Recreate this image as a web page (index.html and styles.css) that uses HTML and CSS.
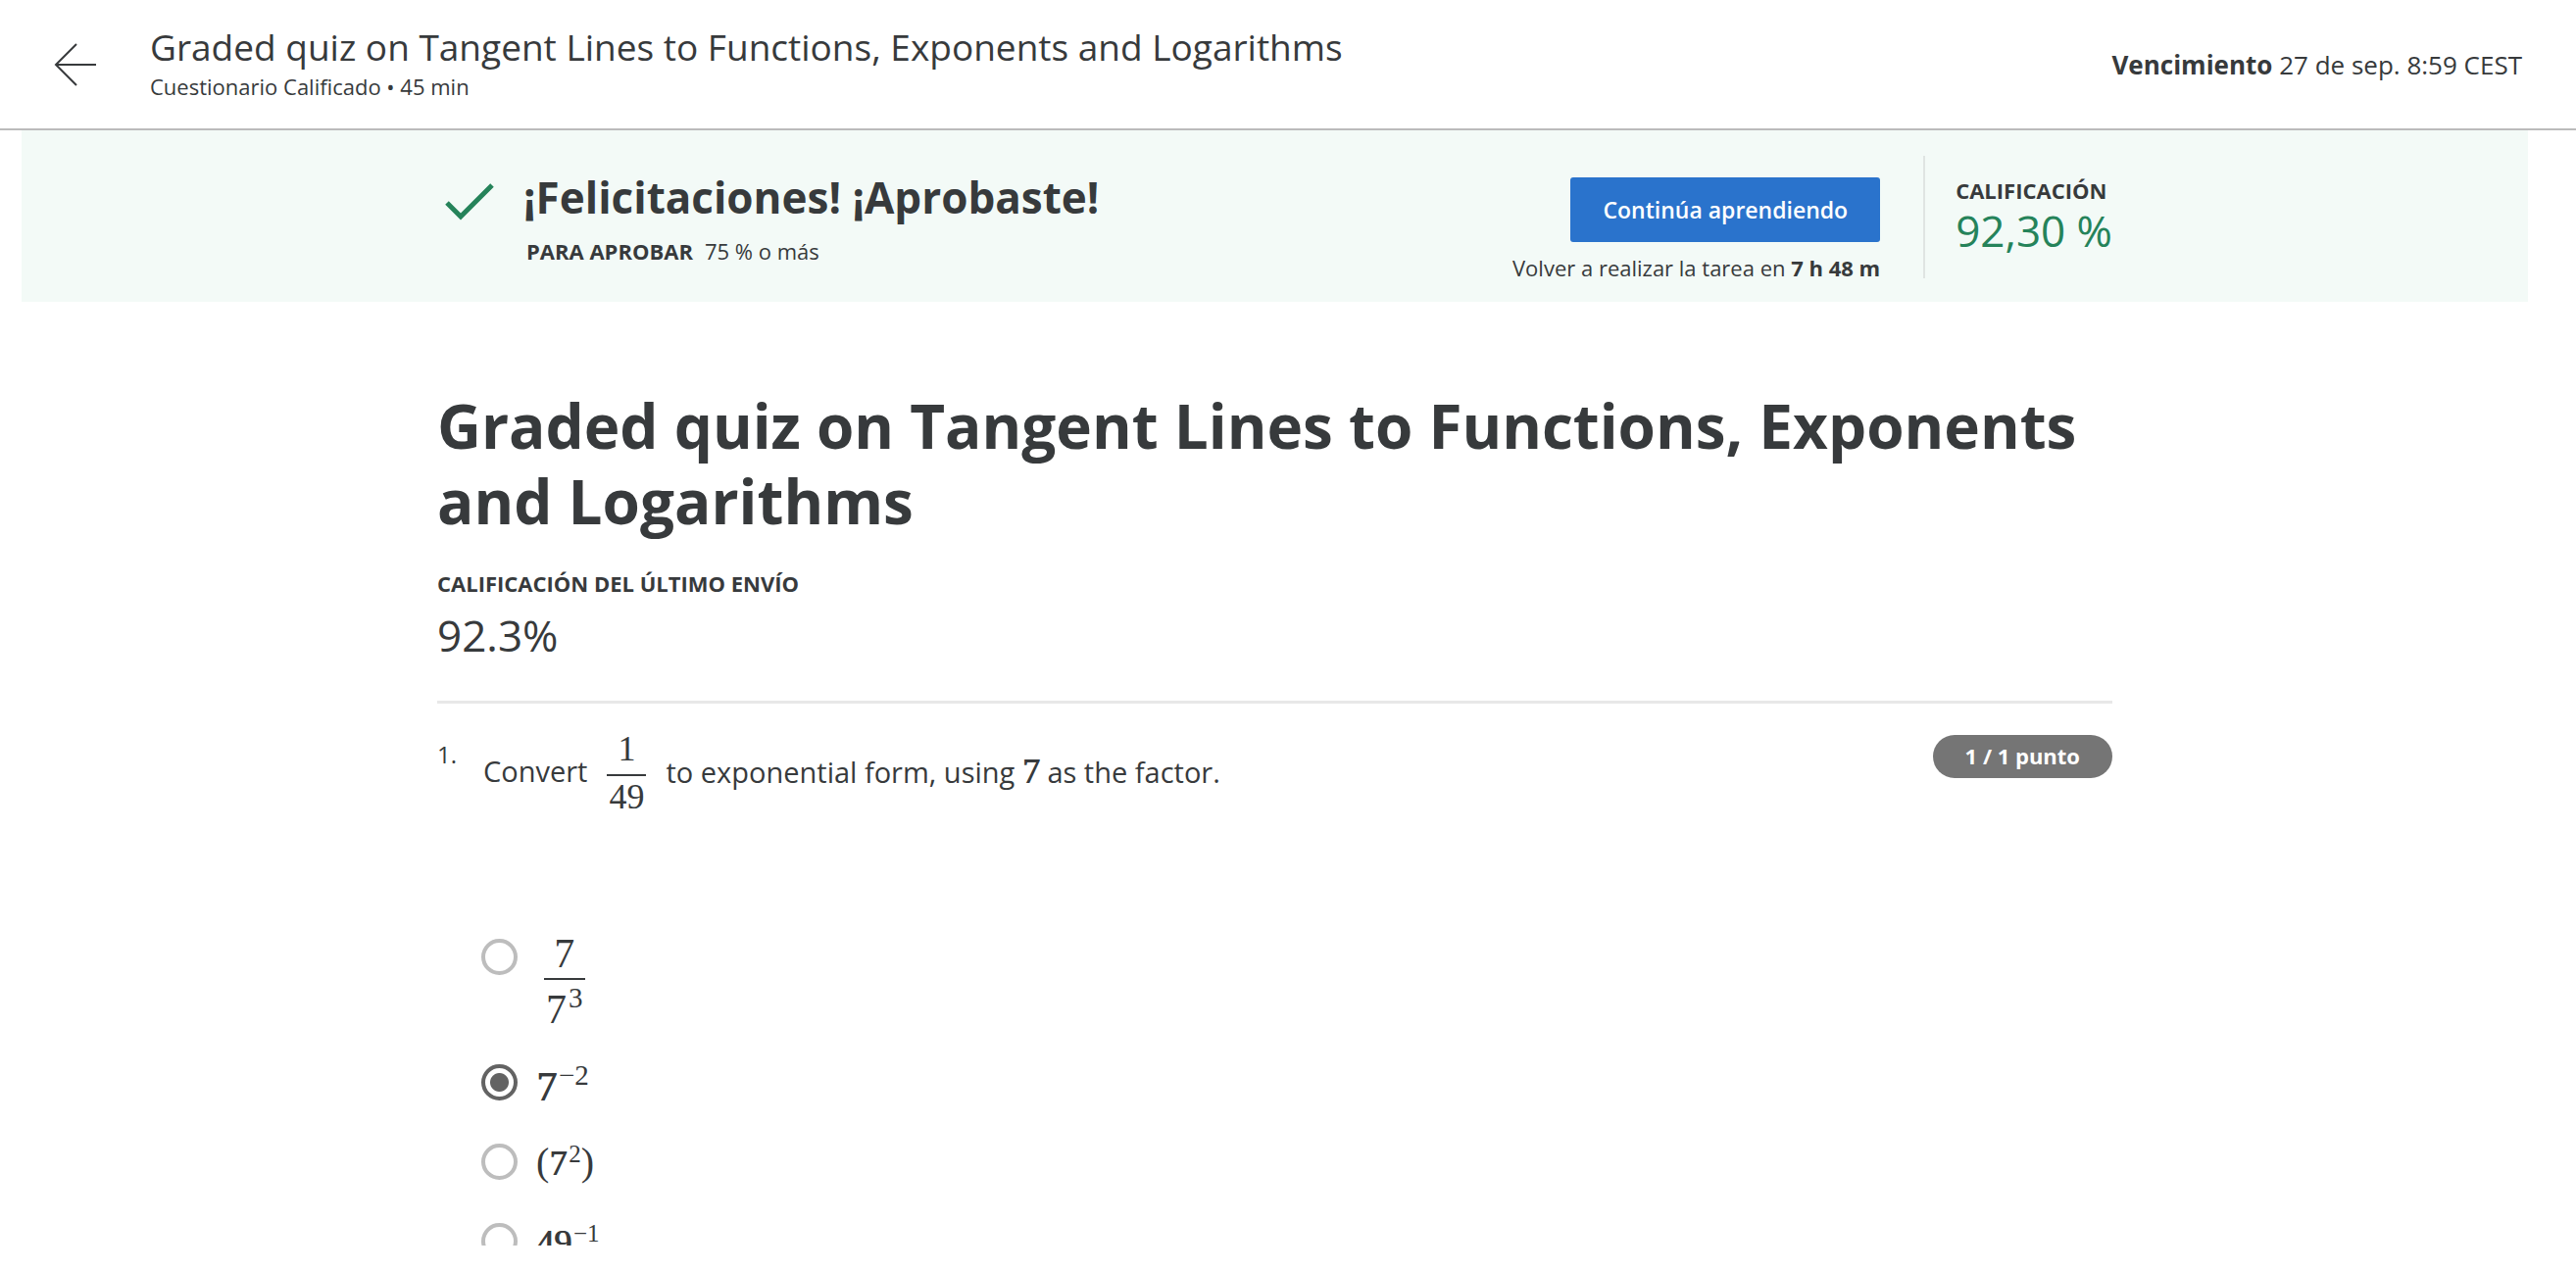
FILE: index.html
```html
<!DOCTYPE html>
<html lang="es">
<head>
  <meta charset="utf-8">
  <meta name="viewport" content="width=device-width, initial-scale=1">
  <title>Graded quiz on Tangent Lines to Functions, Exponents and Logarithms</title>
  <link rel="stylesheet" href="styles.css">
</head>
<body>
  <header class="topbar">
    <a class="back" href="#" aria-label="Volver">
      <svg class="back-icon" viewBox="0 0 44 44" aria-hidden="true">
        <path d="M43 22H2M23 1L2 22l21 21" fill="none" stroke="currentColor" stroke-width="2"/>
      </svg>
    </a>
    <div class="topbar-text">
      <p class="topbar-title">Graded quiz on Tangent Lines to Functions, Exponents and Logarithms</p>
      <p class="topbar-meta">Cuestionario Calificado • 45 min</p>
    </div>
    <p class="due"><strong>Vencimiento</strong> 27 de sep. 8:59 CEST</p>
  </header>

  <main class="page">
    <section class="banner">
      <div class="column banner-row">
        <svg class="check" viewBox="0 0 50 38" aria-hidden="true">
          <path d="M2 20L16 34L48 2" fill="none" stroke="currentColor" stroke-width="5"/>
        </svg>
        <div class="result">
          <h2 class="result-title">¡Felicitaciones! ¡Aprobaste!</h2>
          <p class="result-rule"><strong>PARA APROBAR</strong><span>75 % o más</span></p>
        </div>
        <div class="actions">
          <button class="primary" type="button">Continúa aprendiendo</button>
          <p class="retry">Volver a realizar la tarea en <strong>7 h 48 m</strong></p>
        </div>
        <div class="grade">
          <p class="grade-label">CALIFICACIÓN</p>
          <p class="grade-value">92,30 %</p>
        </div>
      </div>
    </section>

    <div class="column">
      <h1 class="quiz-title">Graded quiz on Tangent Lines to Functions, Exponents and Logarithms</h1>
      <p class="latest-label">CALIFICACIÓN DEL ÚLTIMO ENVÍO</p>
      <p class="latest-value">92.3%</p>

      <section class="question">
        <span class="number">1.</span>
        <div class="question-body">
          <div class="prompt">
            <span class="prompt-text">Convert</span>
            <span class="math fraction"><span class="numerator">1</span><span class="denominator">49</span></span>
            <span class="prompt-text">to exponential form, using <span class="math heavy">7</span> as the factor.</span>
          </div>
          <div class="options">
            <label class="option option-tall">
              <input class="radio" type="radio" name="q1">
              <span class="math large fraction"><span class="numerator">7</span><span class="denominator">7<sup>3</sup></span></span>
            </label>
            <label class="option">
              <input class="radio" type="radio" name="q1" checked>
              <span class="math large"><span class="heavy">7</span><sup>−2</sup></span>
            </label>
            <label class="option">
              <input class="radio" type="radio" name="q1">
              <span class="math"><span class="paren">(</span><span class="heavy">7</span><sup>2</sup><span class="paren">)</span></span>
            </label>
            <label class="option">
              <input class="radio" type="radio" name="q1">
              <span class="math"><span class="heavy">49</span><sup>−1</sup></span>
            </label>
          </div>
        </div>
        <span class="points">1 / 1 punto</span>
      </section>
    </div>
  </main>
</body>
</html>
```
FILE: styles.css
```css
* {
  box-sizing: border-box;
}

body {
  display: flex;
  flex-direction: column;
  height: 100vh;
  margin: 0;
  background: #fff;
  color: #373a3c;
  font-family: "Open Sans", "Noto Sans", sans-serif;
  font-size: 22px;
  line-height: 32px;
}

h1,
h2,
p {
  margin: 0;
}

/* Top bar */

.topbar {
  display: flex;
  flex: none;
  align-items: center;
  padding: 24px 55px 23px;
  border-bottom: 2px solid #bbb;
}

.back {
  width: 98px;
  color: #373a3c;
}

.back-icon {
  display: block;
  width: 44px;
  height: 44px;
}

.topbar-text {
  flex: 1;
  padding-bottom: 4px;
}

.topbar-title {
  font-size: 37px;
  line-height: 48px;
}

.due {
  font-size: 26px;
}

/* Scrolling page */

.page {
  flex: 1;
  min-height: 0;
  margin: 0 49px 26px 22px;
  overflow: hidden;
}

.column {
  max-width: 1709px;
  margin: 0 auto;
}

.banner {
  padding: 26px 0 24px;
  background: #f3faf7;
}

.banner-row {
  display: flex;
  align-items: stretch;
}

.check {
  width: 50px;
  height: 38px;
  margin: 28px 30px 0 8px;
  color: #25835a;
}

.result {
  flex: 1;
  padding-top: 12px;
}

.result-title {
  font-size: 44px;
  line-height: 60px;
}

.result-rule {
  display: flex;
  gap: 12px;
  padding: 9px 0 0 3px;
}

.actions {
  display: flex;
  flex-direction: column;
  align-items: flex-end;
  gap: 15px;
  padding-top: 22px;
}

.primary {
  height: 66px;
  padding: 0 33px;
  border: 0;
  border-radius: 3px;
  background: #2a73cc;
  color: #fff;
  font: 600 23px/32px "Open Sans", "Noto Sans", sans-serif;
}

.retry {
  line-height: 22px;
}

.grade {
  margin-left: 44px;
  padding: 19px 0 0 31px;
  border-left: 2px solid #dfe4e2;
}

.grade-label {
  font-weight: 700;
}

.grade-value {
  color: #25835a;
  font-size: 44px;
  line-height: 50px;
}

/* Quiz */

.quiz-title {
  padding-top: 88px;
  font-size: 62px;
  line-height: 77px;
}

.latest-label {
  padding-top: 29px;
  font-weight: 700;
}

.latest-value {
  padding: 7px 0 37px;
  border-bottom: 3px solid #e8e8e8;
  font-size: 44px;
  line-height: 60px;
}

.question {
  display: flex;
  align-items: flex-start;
  padding-top: 32px;
}

.number {
  width: 45px;
  padding-top: 4px;
  font-size: 24px;
}

.question-body {
  flex: 1;
}

.prompt {
  display: flex;
  align-items: center;
  gap: 20px;
  padding-left: 2px;
  font-size: 29px;
  line-height: 40px;
}

.prompt-text {
  padding-bottom: 4px;
}

.points {
  padding: 5px 33px 7px;
  border-radius: 22px;
  background: #757575;
  color: #fff;
  font-weight: 700;
}

/* Formulas */

.math {
  font-family: "Liberation Serif", serif;
  font-size: 36px;
  line-height: 40px;
}

.math.large {
  font-size: 42px;
  line-height: 46px;
}

.math sup {
  padding-left: 2px;
  font-size: 25px;
  line-height: 1px;
  vertical-align: 13px;
}

.large sup {
  font-size: 29px;
  vertical-align: 16px;
}

.paren {
  font-size: 40px;
  line-height: 1px;
}

.heavy {
  text-shadow: 1px 0 #373a3c;
}

.fraction {
  display: inline-flex;
  flex-direction: column;
}

.numerator {
  padding-bottom: 12px;
  border-bottom: 2px solid currentColor;
  line-height: 28px;
  text-align: center;
}

.denominator {
  padding: 6px 2px 0;
  line-height: 30px;
}

.large.fraction {
  margin-left: 8px;
}

.large .numerator {
  padding-bottom: 10px;
  line-height: 30px;
}

.large .denominator {
  padding: 15px 2px 0;
}

/* Answers */

.options {
  display: flex;
  flex-direction: column;
  gap: 41px;
  padding-top: 130px;
}

.option {
  display: flex;
  align-items: flex-start;
  gap: 19px;
  height: 40px;
}

.option-tall {
  height: auto;
}

.radio {
  flex: none;
  width: 37px;
  height: 37px;
  margin: 0;
  border: 4px solid #bdbdbd;
  border-radius: 50%;
  appearance: none;
}

.radio:checked {
  border-color: #636363;
  background: radial-gradient(circle, #636363 9px, transparent 10px);
}
```
